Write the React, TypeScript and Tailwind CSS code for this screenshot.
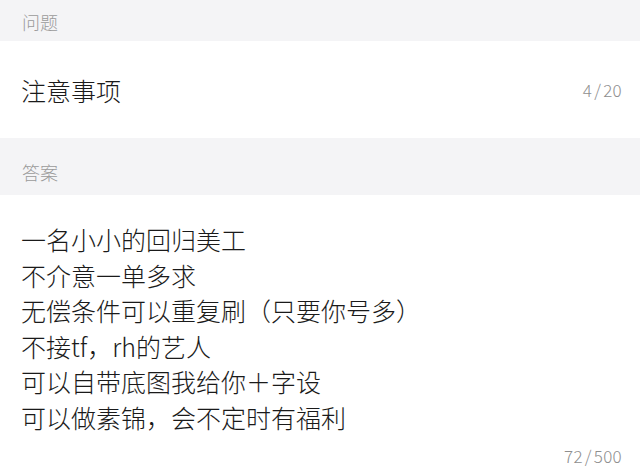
const ANSWER = [
  "一名小小的回归美工",
  "不介意一单多求",
  "无偿条件可以重复刷（只要你号多）",
  "不接tf，rh的艺人",
  "可以自带底图我给你＋字设",
  "可以做素锦，会不定时有福利",
];

function Counter({ n, max }: { n: number; max: number }) {
  return (
    <span className="text-[17px] leading-[22px] text-[#8e8e8e] font-light tracking-[0.3px]">
      {n}
      <span className="px-[2px]">/</span>
      {max}
    </span>
  );
}

export default function App() {
  return (
    <div
      className="w-[640px] h-[476px] overflow-hidden bg-[#f4f4f6] flex flex-col"
      style={{ fontFamily: '"Noto Sans CJK SC", "Noto Sans", sans-serif' }}
    >
      <div className="h-[41px] px-[22px] pt-[10px] text-[18px] leading-[24px] font-light text-[#9a9a9a]">问题</div>
      <div className="h-[97px] bg-white pl-[21px] pr-[18px] flex items-center justify-between">
        <span className="text-[25px] leading-[34px] font-light text-[#1a1a1a]">注意事项</span>
        <Counter n={4} max={20} />
      </div>
      <div className="h-[57px] px-[22px] pt-[22px] text-[18px] leading-[24px] font-light text-[#9a9a9a]">答案</div>
      <div className="flex-1 bg-white pl-[21px] pr-[18px] pt-[27px] pb-[9px] flex flex-col">
        <div className="text-[25px] leading-[35.5px] font-light text-[#1a1a1a]">
          {ANSWER.map((line) => (
            <div key={line}>{line}</div>
          ))}
        </div>
        <div className="mt-auto flex justify-end">
          <Counter n={72} max={500} />
        </div>
      </div>
    </div>
  );
}
